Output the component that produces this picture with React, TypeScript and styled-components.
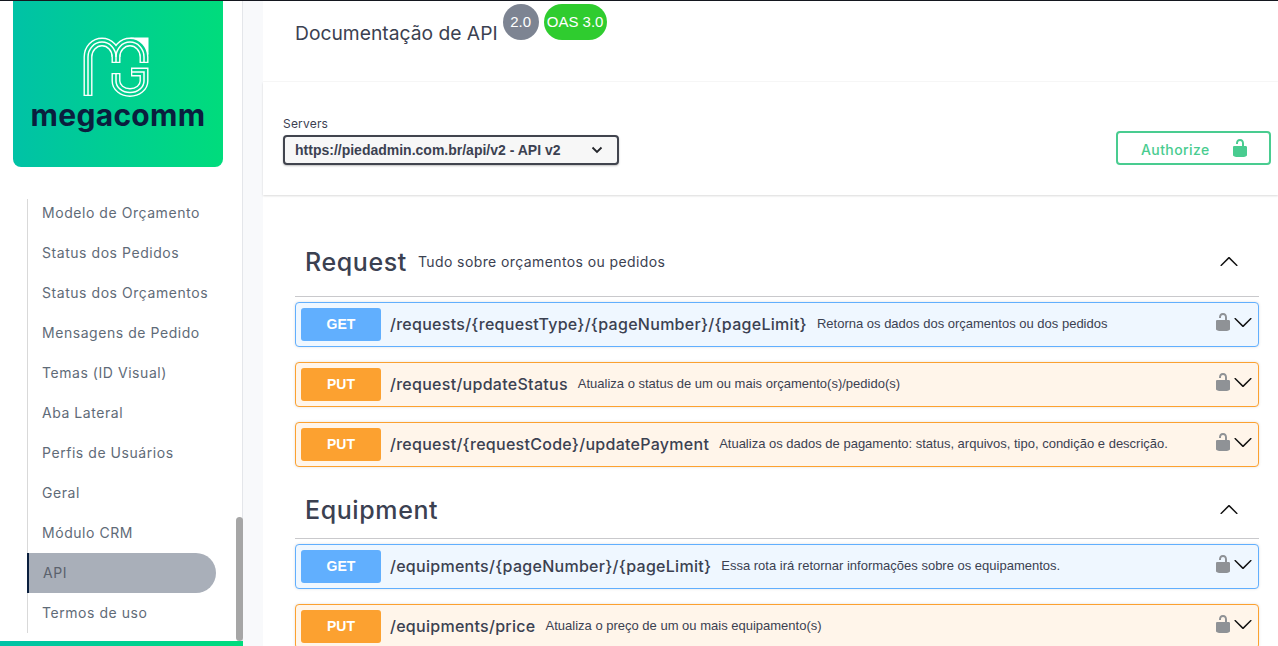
import styled, { createGlobalStyle } from "styled-components";

const GlobalStyle = createGlobalStyle`
  html, body {
    margin: 0;
    padding: 0;
    height: 100%;
    overflow: hidden;
    background: #fff;
  }
  * { box-sizing: border-box; }
  #root { height: 100%; }
`;

const wide = `"Inter", "Liberation Sans", sans-serif`;
const plain = `"Liberation Sans", Arial, sans-serif`;

const Page = styled.div`
  display: flex;
  width: 1278px;
  height: 646px;
  overflow: hidden;
  border-top: 1px solid #14171f;
  background: #f8f9fb;
`;

const Sidebar = styled.aside`
  position: relative;
  flex: 0 0 243px;
  display: flex;
  flex-direction: column;
  background: #fff;
  border-right: 1px solid #e4e6ea;
  padding-left: 13px;
`;

const LogoCard = styled.div`
  width: 210px;
  height: 166px;
  flex: none;
  display: flex;
  flex-direction: column;
  align-items: center;
  padding-top: 36px;
  border-radius: 0 0 8px 8px;
  background: linear-gradient(90deg, #00c2a6, #00dc7c);
`;

const MarkSvg = styled.svg`
  margin-left: -4px;
  flex: none;
`;

const Wordmark = styled.div`
  margin-top: 1px;
  font: 700 30px/34px ${wide};
  letter-spacing: 0.3px;
  color: #0a1f3e;
`;

const Nav = styled.nav`
  position: relative;
  margin: 26px 0 0 14px;
  width: 189px;
  height: 440px;
  display: flex;
  flex-direction: column;

  &::before {
    content: "";
    position: absolute;
    left: 0;
    top: 6px;
    bottom: 0;
    width: 1px;
    background: #d9d9d9;
  }
`;

const NavItem = styled.div<{ $active?: boolean }>`
  position: relative;
  height: 40px;
  flex: none;
  display: flex;
  align-items: center;
  padding-left: 15px;
  font: 400 14px/20px ${wide};
  letter-spacing: 0.55px;
  color: #5f6b78;
  ${(p) =>
    p.$active &&
    `
    padding-left: 14px;
    color: #5b626d;
    background: #a9afb9;
    border-left: 2px solid #0a1f3e;
    border-radius: 0 20px 20px 0;
  `}
`;

const ScrollThumb = styled.div`
  position: absolute;
  left: 236px;
  top: 516px;
  width: 7px;
  height: 124px;
  border-radius: 4px;
  background: #a6a6a6;
`;

const BottomBar = styled.div`
  position: absolute;
  left: 0;
  right: -1px;
  bottom: 0;
  height: 5px;
  background: linear-gradient(90deg, #00c2a6, #00dc7c);
`;

const Main = styled.main`
  flex: 1;
  margin-left: 20px;
  background: #fff;
  display: flex;
  flex-direction: column;
  min-width: 0;
`;

const InfoHeader = styled.header`
  height: 81px;
  flex: none;
  display: flex;
  align-items: flex-start;
  padding-left: 32px;
  border-bottom: 1px solid #f8f8f8;
`;

const ApiTitle = styled.h1`
  margin: 19px 5px 0 0;
  font: 400 19.25px/26px ${wide};
  color: #3b4151;
`;

const Badge = styled.span<{ $bg: string; $w: number }>`
  margin: 3px 5px 0 0;
  width: ${(p) => p.$w}px;
  height: 36px;
  display: flex;
  align-items: center;
  justify-content: center;
  border-radius: 18px;
  background: ${(p) => p.$bg};
  font: 400 15px/16px ${plain};
  color: #fff;
`;

const SchemeBar = styled.section`
  height: 113px;
  flex: none;
  display: flex;
  justify-content: space-between;
  padding: 34px 7px 0 20px;
  box-shadow: 0 1px 2px rgba(0, 0, 0, 0.15);
`;

const ServersLabel = styled.div`
  font: 400 12px/16px ${wide};
  letter-spacing: 0.2px;
  color: #3b4151;
  margin-bottom: 3px;
`;

const ServerSelect = styled.div`
  width: 336px;
  height: 30px;
  display: flex;
  align-items: center;
  justify-content: space-between;
  padding: 0 14px 0 10px;
  border: 2px solid #41444e;
  border-radius: 4px;
  background: #f7f7f7;
  box-shadow: 0 1px 2px rgba(0, 0, 0, 0.25);
  font: 700 14px/18px ${plain};
  color: #3b4151;
`;

const AuthorizeButton = styled.button`
  margin-top: 15px;
  width: 155px;
  height: 34px;
  display: flex;
  align-items: center;
  padding: 0 0 0 23px;
  gap: 20px;
  border: 2px solid #49cc90;
  border-radius: 4px;
  background: transparent;
  font: 500 14px/18px ${wide};
  letter-spacing: 0.4px;
  color: #49cc90;
`;

const AuthorizeLabel = styled.span`
  margin-top: 4px;
`;

const Content = styled.div`
  padding: 0 19px 0 32px;
`;

const TagHeader = styled.div<{ $first?: boolean }>`
  display: flex;
  align-items: center;
  margin: ${(p) => (p.$first ? 49 : 25)}px 0 5px;
  padding: 0 20px ${(p) => (p.$first ? 16 : 10)}px 10px;
  border-bottom: 1px solid #c9c9cc;
`;

const TagName = styled.h3`
  margin: 0 11px 0 0;
  font: 500 25px/36px ${wide};
  letter-spacing: 0.6px;
  color: #3b4151;
`;

const TagDescription = styled.span`
  flex: 1;
  font: 400 14px/18px ${wide};
  letter-spacing: 0.4px;
  color: #3b4151;
`;

const methodColors = {
  GET: { main: "#61affe", bg: "#eff7ff" },
  PUT: { main: "#fca130", bg: "#fff5ea" },
};

type Method = keyof typeof methodColors;

const OpRow = styled.div<{ $method: Method }>`
  height: 45px;
  display: flex;
  align-items: center;
  padding: 0 5px;
  margin-bottom: 15px;
  border: 1px solid ${(p) => methodColors[p.$method].main};
  border-radius: 4px;
  background: ${(p) => methodColors[p.$method].bg};
  box-shadow: 0 0 3px rgba(0, 0, 0, 0.12);
`;

const MethodTag = styled.span<{ $method: Method }>`
  flex: 0 0 80px;
  height: 33px;
  display: flex;
  align-items: center;
  justify-content: center;
  padding-bottom: 2px;
  border-radius: 3px;
  background: ${(p) => methodColors[p.$method].main};
  font: 700 14px/16px ${plain};
  color: #fff;
`;

const OpPath = styled.span`
  margin: 0 0 2px 9px;
  font: 500 16px/20px ${wide};
  letter-spacing: 0.28px;
  color: #3b4151;
  white-space: nowrap;
`;

const OpSummary = styled.span`
  flex: 1;
  margin: 0 0 2px 10px;
  font: 400 13px/16px ${plain};
  color: #3b4151;
  white-space: nowrap;
`;

const OpLock = styled.svg`
  flex: none;
  margin-top: -6px;
  width: 20px;
  height: 20px;
  fill: #8f9296;
`;

const Arrow = styled.svg<{ $up?: boolean }>`
  flex: none;
  width: 20px;
  height: 20px;
  fill: #111;
  ${(p) => p.$up && "transform: rotate(180deg);"}
`;

const OpArrow = styled(Arrow)`
  margin-top: -5px;
`;

const AuthLock = styled.svg`
  width: 20px;
  height: 20px;
  fill: #49cc90;
`;

const unlockedPath =
  "M15.8 8H14V5.6C14 2.703 12.665 1 10 1 7.334 1 6 2.703 6 5.6V6h2v-.801C8 3.754 8.797 3 10 3c1.203 0 2 .754 2 2.199V8H4c-.553 0-1 .646-1 1.199V17c0 .549.428 1.139.951 1.307l1.197.387C5.672 18.861 6.55 19 7.1 19h5.8c.549 0 1.428-.139 1.951-.307l1.196-.387c.524-.167.953-.757.953-1.306V9.199C17 8.646 16.352 8 15.8 8z";
const arrowPath =
  "M17.418 6.109c.272-.268.709-.268.979 0s.271.701 0 .969l-7.908 7.83c-.27.268-.707.268-.979 0l-7.908-7.83c-.27-.268-.27-.701 0-.969.271-.268.709-.268.979 0L10 13.25l7.418-7.141z";

function LogoMark() {
  // three nested lines, drawn as a wide white stroke with the card colour and a thin line on top
  const strands = [
    "M88 96V57A14 15 0 0 1 116 57V63",
    "M116 57A14 15 0 0 1 144 57V63",
    "M116 73V81A14 11.5 0 0 0 144 81V72H131",
  ];
  const inner = [
    "M88 94.7V57A14 15 0 0 1 116 57V61.7",
    "M116 57A14 15 0 0 1 144 57V61.7",
    "M116 74.3V81A14 11.5 0 0 0 144 81V72H132.3",
  ];
  return (
    <MarkSvg width="66" height="60" viewBox="83 37 66 60" fill="none">
      {strands.map((d) => (
        <path key={d} d={d} stroke="#fff" strokeWidth="9" />
      ))}
      <path d="M130 37.5H148.5V55L144 46Z" fill="#fff" />
      {inner.map((d) => (
        <path key={d} d={d} stroke="#03cf8e" strokeWidth="6.2" />
      ))}
      {strands.map((d) => (
        <path key={d} d={d} stroke="#fff" strokeWidth="1.5" />
      ))}
    </MarkSvg>
  );
}

const navItems = [
  "Modelo de Orçamento",
  "Status dos Pedidos",
  "Status dos Orçamentos",
  "Mensagens de Pedido",
  "Temas (ID Visual)",
  "Aba Lateral",
  "Perfis de Usuários",
  "Geral",
  "Módulo CRM",
  "API",
  "Termos de uso",
];

const groups: {
  name: string;
  description?: string;
  ops: { method: Method; path: string; summary: string }[];
}[] = [
  {
    name: "Request",
    description: "Tudo sobre orçamentos ou pedidos",
    ops: [
      {
        method: "GET",
        path: "/requests/{requestType}/{pageNumber}/{pageLimit}",
        summary: "Retorna os dados dos orçamentos ou dos pedidos",
      },
      {
        method: "PUT",
        path: "/request/updateStatus",
        summary: "Atualiza o status de um ou mais orçamento(s)/pedido(s)",
      },
      {
        method: "PUT",
        path: "/request/{requestCode}/updatePayment",
        summary: "Atualiza os dados de pagamento: status, arquivos, tipo, condição e descrição.",
      },
    ],
  },
  {
    name: "Equipment",
    ops: [
      {
        method: "GET",
        path: "/equipments/{pageNumber}/{pageLimit}",
        summary: "Essa rota irá retornar informações sobre os equipamentos.",
      },
      {
        method: "PUT",
        path: "/equipments/price",
        summary: "Atualiza o preço de um ou mais equipamento(s)",
      },
    ],
  },
];

export default function App() {
  return (
    <>
      <GlobalStyle />
      <Page>
        <Sidebar>
          <LogoCard>
            <LogoMark />
            <Wordmark>megacomm</Wordmark>
          </LogoCard>
          <Nav>
            {navItems.map((item) => (
              <NavItem key={item} $active={item === "API"}>
                {item}
              </NavItem>
            ))}
          </Nav>
          <ScrollThumb />
          <BottomBar />
        </Sidebar>
        <Main>
          <InfoHeader>
            <ApiTitle>Documentação de API</ApiTitle>
            <Badge $bg="#7d8492" $w={36}>2.0</Badge>
            <Badge $bg="#2fcc2f" $w={63}>OAS 3.0</Badge>
          </InfoHeader>
          <SchemeBar>
            <div>
              <ServersLabel>Servers</ServersLabel>
              <ServerSelect>
                https://piedadmin.com.br/api/v2 - API v2
                <svg width="12" height="8" viewBox="0 0 12 8" fill="none">
                  <path d="M1.5 1.5 6 6l4.5-4.5" stroke="#24262b" strokeWidth="1.8" />
                </svg>
              </ServerSelect>
            </div>
            <AuthorizeButton>
              <AuthorizeLabel>Authorize</AuthorizeLabel>
              <AuthLock viewBox="0 0 20 20">
                <path d={unlockedPath} />
              </AuthLock>
            </AuthorizeButton>
          </SchemeBar>
          <Content>
            {groups.map((group, i) => (
              <div key={group.name}>
                <TagHeader $first={i === 0}>
                  <TagName>{group.name}</TagName>
                  <TagDescription>{group.description}</TagDescription>
                  <Arrow $up viewBox="0 0 20 20">
                    <path d={arrowPath} />
                  </Arrow>
                </TagHeader>
                {group.ops.map((op) => (
                  <OpRow key={op.path} $method={op.method}>
                    <MethodTag $method={op.method}>{op.method}</MethodTag>
                    <OpPath>{op.path}</OpPath>
                    <OpSummary>{op.summary}</OpSummary>
                    <OpLock viewBox="0 0 20 20">
                      <path d={unlockedPath} />
                    </OpLock>
                    <OpArrow viewBox="0 0 20 20">
                      <path d={arrowPath} />
                    </OpArrow>
                  </OpRow>
                ))}
              </div>
            ))}
          </Content>
        </Main>
      </Page>
    </>
  );
}
